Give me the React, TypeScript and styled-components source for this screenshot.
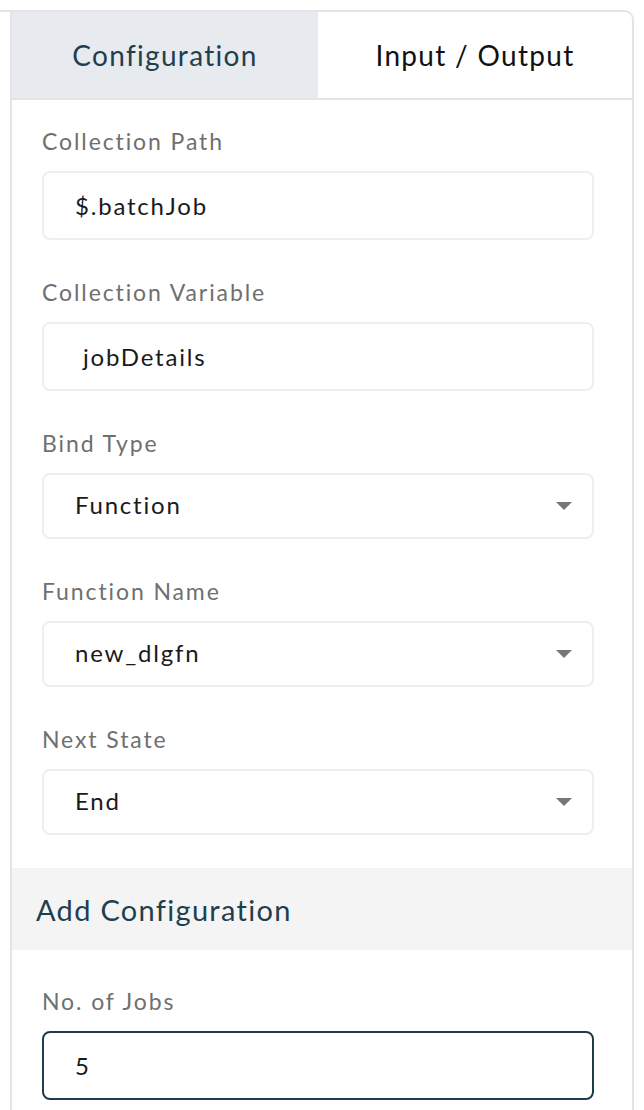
import React from "react";
import styled, { createGlobalStyle } from "styled-components";

const Global = createGlobalStyle`
  html, body { margin: 0; padding: 0; background: #ffffff; }
  body {
    font-family: "Lato", "Open Sans", sans-serif;
    font-variant-ligatures: none;
  }
  * { box-sizing: border-box; }
`;

const Outer = styled.div`
  margin-top: 10px;
  width: 634px;
  border-top: 2px solid #e4e4e4;
  border-right: 2px solid #e4e4e4;
  border-top-right-radius: 10px;
  min-height: 1100px;
`;

const Panel = styled.div`
  margin-left: 10px;
  border-left: 2px solid #e4e4e4;
  min-height: 1100px;
`;

const Tabs = styled.div`
  display: grid;
  grid-template-columns: 306px 1fr;
  height: 88px;
  border-bottom: 2px solid #e4e4e4;
`;

const Tab = styled.div<{ $active?: boolean }>`
  display: flex;
  align-items: center;
  justify-content: center;
  background: ${(p) => (p.$active ? "#e7eaef" : "#ffffff")};
  color: ${(p) => (p.$active ? "#1f3f4e" : "#111111")};
  font-size: 28px;
  letter-spacing: 1.3px;
  border-top-right-radius: ${(p) => (p.$active ? "0" : "8px")};
`;

const Section = styled.div<{ $top: number; $bottom: number }>`
  padding: ${(p) => p.$top}px 38px ${(p) => p.$bottom}px 30px;
  display: flex;
  flex-direction: column;
`;

const Field = styled.div`
  display: flex;
  flex-direction: column;
  & + & {
    margin-top: 37px;
  }
`;

const Label = styled.div`
  height: 30px;
  line-height: 30px;
  font-size: 23px;
  letter-spacing: 1.9px;
  color: #6f6f6f;
  margin-bottom: 15px;
`;

const TextInput = styled.input<{ $focused?: boolean }>`
  width: 552px;
  height: 69px;
  border: 2px solid ${(p) => (p.$focused ? "#1e3d4b" : "#eeeeee")};
  border-radius: 8px;
  padding: 0 0 0 31px;
  font-family: inherit;
  font-variant-ligatures: none;
  font-size: 24px;
  letter-spacing: 1.8px;
  color: #1a1a1a;
  background: #ffffff;
  outline: none;
`;

const SelectBox = styled.div`
  width: 552px;
  height: 66px;
  border: 2px solid #eeeeee;
  border-radius: 8px;
  padding: 0 20px 4px 31px;
  display: flex;
  align-items: center;
  justify-content: space-between;
  font-size: 24px;
  letter-spacing: 1.8px;
  color: #1a1a1a;
`;

const CaretWrap = styled.span`
  display: flex;
  padding-top: 4px;
`;

const SubHeader = styled.div`
  height: 82px;
  background: #f4f4f4;
  display: flex;
  align-items: center;
  padding-left: 24px;
  font-size: 29px;
  letter-spacing: 1.3px;
  color: #1f3f4e;
`;

const Caret = () => (
  <CaretWrap>
    <svg width="16" height="8" viewBox="0 0 16 8">
      <path d="M0 0 L16 0 L8 8 Z" fill="#777777" />
    </svg>
  </CaretWrap>
);

const Select = ({ value }: { value: string }) => (
  <SelectBox>
    <span>{value}</span>
    <Caret />
  </SelectBox>
);

export default function App() {
  return (
    <>
      <Global />
      <Outer>
        <Panel>
          <Tabs>
            <Tab $active>Configuration</Tab>
            <Tab>Input / Output</Tab>
          </Tabs>
          <Section $top={26} $bottom={33}>
            <Field>
              <Label>Collection Path</Label>
              <TextInput readOnly defaultValue="$.batchJob" />
            </Field>
            <Field>
              <Label>Collection Variable</Label>
              <TextInput readOnly defaultValue=" jobDetails" />
            </Field>
            <Field>
              <Label>Bind Type</Label>
              <Select value="Function" />
            </Field>
            <Field>
              <Label>Function Name</Label>
              <Select value="new_dlgfn" />
            </Field>
            <Field>
              <Label>Next State</Label>
              <Select value="End" />
            </Field>
          </Section>
          <SubHeader>Add Configuration</SubHeader>
          <Section $top={36} $bottom={20}>
            <Field>
              <Label>No. of Jobs</Label>
              <TextInput $focused readOnly defaultValue="5" />
            </Field>
          </Section>
        </Panel>
      </Outer>
    </>
  );
}
